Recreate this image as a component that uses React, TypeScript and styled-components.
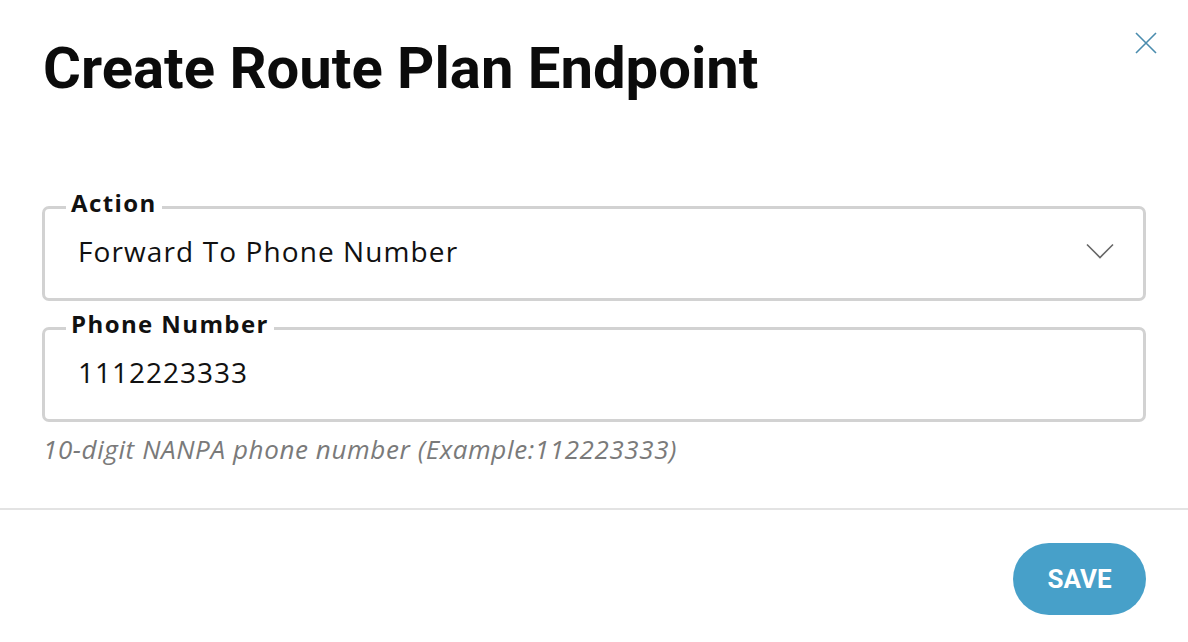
import React, { useState } from "react";
import styled, { createGlobalStyle } from "styled-components";

const GlobalStyle = createGlobalStyle`
  html, body {
    margin: 0;
    padding: 0;
    background: #ffffff;
    font-family: "Open Sans", "Liberation Sans", sans-serif;
    color: #111;
  }
`;

function CloseIcon(): JSX.Element {
  return (
    <svg width="24" height="24" viewBox="0 0 24 24" fill="none">
      <path d="M2 2L22 22M22 2L2 22" stroke="#4a8cae" strokeWidth="1.6" />
    </svg>
  );
}

function ChevronIcon(): JSX.Element {
  return (
    <svg width="28" height="16" viewBox="0 0 28 16" fill="none">
      <path d="M1 1.5L14 14.5L27 1.5" stroke="#666" strokeWidth="1.6" />
    </svg>
  );
}

function App(): JSX.Element {
  const [action] = useState("Forward To Phone Number");
  const [phone, setPhone] = useState("1112223333");

  return (
    <React.Fragment>
      <GlobalStyle />
      <Dialog>
        <Header>
          <Title>Create Route Plan Endpoint</Title>
          <CloseButton aria-label="close">
            <CloseIcon />
          </CloseButton>
        </Header>

        <Body>
          <Field>
            <Legend>Action</Legend>
            <SelectRow>
              <Value>{action}</Value>
              <ChevronIcon />
            </SelectRow>
          </Field>

          <Field>
            <Legend>Phone Number</Legend>
            <TextInput
              value={phone}
              onChange={(e) => setPhone(e.target.value)}
            />
          </Field>
          <Helper>10-digit NANPA phone number (Example:112223333)</Helper>
        </Body>

        <Footer>
          <SaveButton>SAVE</SaveButton>
        </Footer>
      </Dialog>
    </React.Fragment>
  );
}

export default App;

const Dialog = styled.div`
  width: 1188px;
  height: 642px;
  display: flex;
  flex-direction: column;
  background: #fff;
  overflow: hidden;
`;

const Header = styled.div`
  display: flex;
  justify-content: space-between;
  align-items: flex-start;
  padding: 35px 30px 0 43px;
`;

const Title = styled.h1`
  margin: 0;
  font-family: Roboto, "Liberation Sans", sans-serif;
  font-size: 58px;
  line-height: 66px;
  font-weight: 700;
  color: #0b0b0b;
`;

const CloseButton = styled.button`
  margin-top: -4px;
  padding: 0;
  border: none;
  background: none;
  cursor: pointer;
  display: flex;
`;

const Body = styled.div`
  display: flex;
  flex-direction: column;
  gap: 10px;
  padding: 89px 42px 0 42px;
`;

const Field = styled.fieldset`
  margin: 0;
  padding: 0;
  height: 111px;
  box-sizing: border-box;
  border: 3px solid #d2d2d2;
  border-radius: 7px;
  min-width: 0;
`;

const Legend = styled.legend`
  margin-left: 21px;
  padding: 0 5px 9px 5px;
  font-size: 24px;
  font-weight: 700;
  line-height: 26px;
  letter-spacing: 1.4px;
  color: #111;
`;

const SelectRow = styled.div`
  display: flex;
  align-items: center;
  justify-content: space-between;
  padding: 9px 29px 0 33px;
`;

const Value = styled.span`
  font-size: 28px;
  line-height: 34px;
  letter-spacing: 1.1px;
  color: #111;
`;

const TextInput = styled.input`
  display: block;
  width: 100%;
  box-sizing: border-box;
  margin-top: 9px;
  padding: 0 33px;
  border: none;
  outline: none;
  background: transparent;
  font-family: "Open Sans", "Liberation Sans", sans-serif;
  font-size: 28px;
  line-height: 34px;
  letter-spacing: 1px;
  height: 34px;
  color: #111;
`;

const Helper = styled.div`
  margin-top: 2px;
  padding-left: 1px;
  font-size: 26px;
  font-style: italic;
  line-height: 30px;
  letter-spacing: 0.6px;
  color: #7a7a7a;
`;

const Footer = styled.div`
  margin-top: 44px;
  border-top: 2px solid #e3e3e3;
  display: flex;
  justify-content: flex-end;
  padding: 33px 42px 0 0;
`;

const SaveButton = styled.button`
  width: 133px;
  height: 72px;
  border: none;
  border-radius: 36px;
  background: #47a0c9;
  color: #fff;
  font-family: Roboto, "Liberation Sans", sans-serif;
  font-size: 26px;
  font-weight: 700;
  cursor: pointer;
`;
